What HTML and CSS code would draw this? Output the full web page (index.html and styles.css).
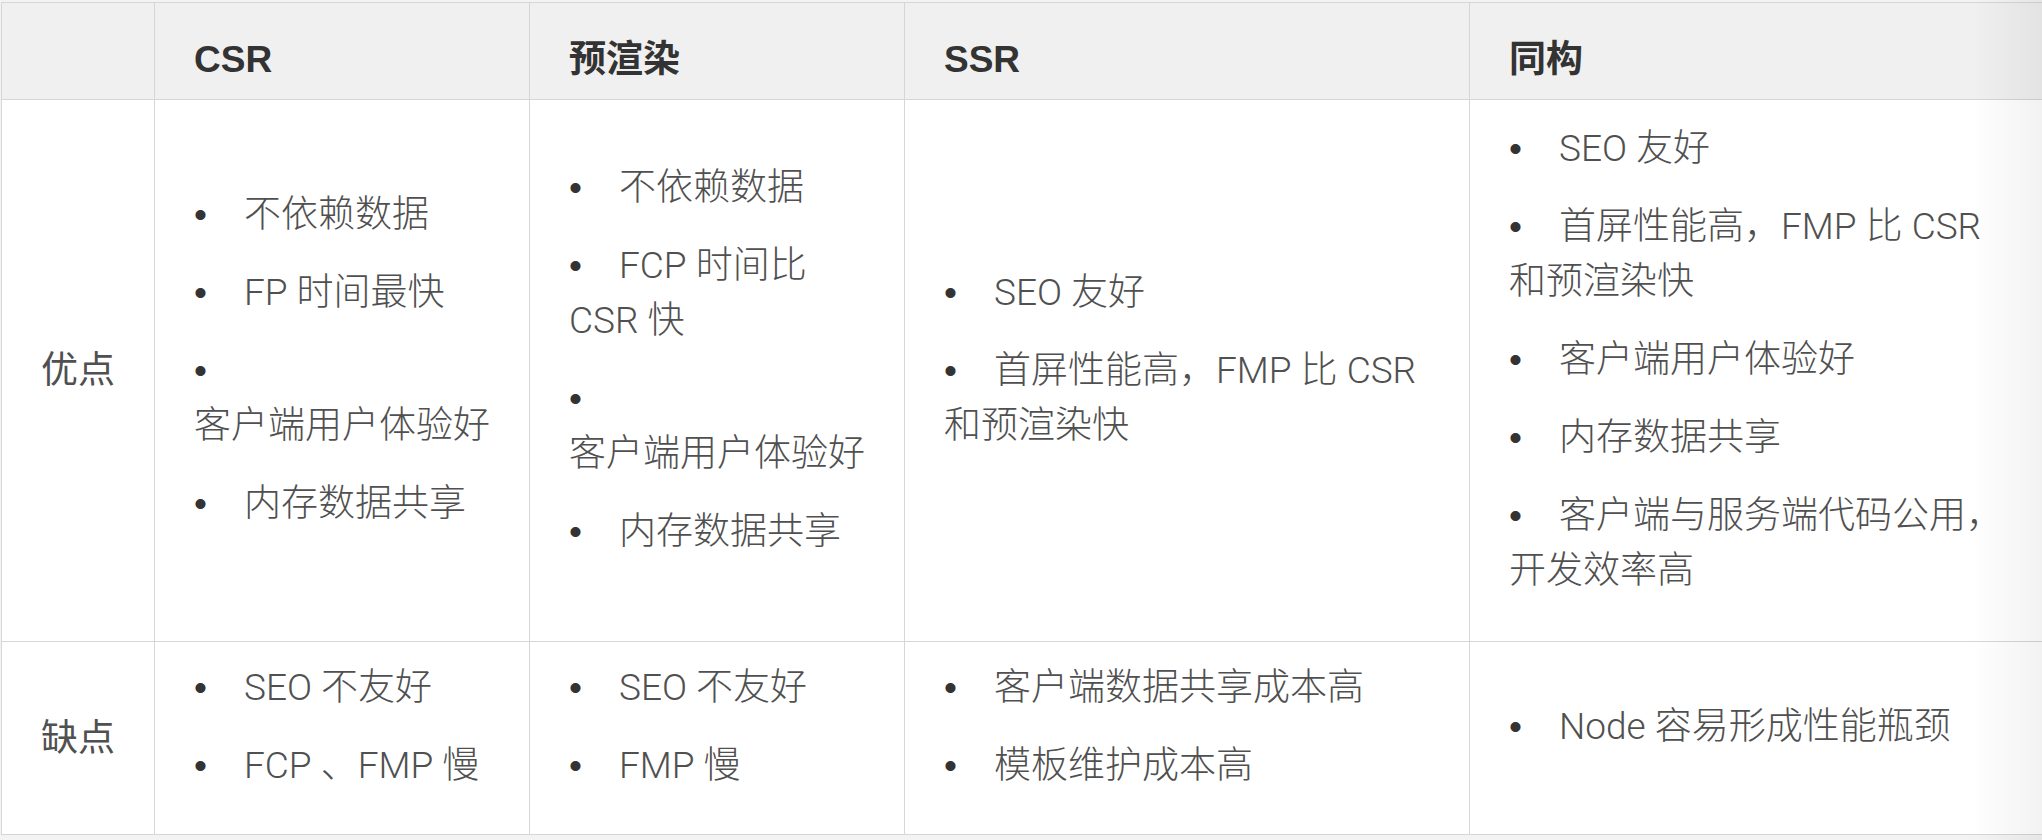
FILE: index.html
```html
<!DOCTYPE html>
<html lang="zh-CN">
<head>
<meta charset="utf-8">
<title>CSR / 预渲染 / SSR / 同构</title>
<link rel="stylesheet" href="styles.css">
</head>
<body>
<table class="compare">
  <colgroup>
    <col class="col-label">
    <col class="col-narrow">
    <col class="col-narrow">
    <col class="col-wide">
    <col class="col-last">
  </colgroup>
  <thead>
    <tr class="head-row">
      <th></th>
      <th>CSR</th>
      <th>预渲染</th>
      <th>SSR</th>
      <th>同构</th>
    </tr>
  </thead>
  <tbody>
    <tr class="pros-row">
      <th class="row-label">优点</th>
      <td>
        <ul class="points">
          <li>不依赖数据</li>
          <li>FP 时间最快</li>
          <li>客户端用户体验好</li>
          <li>内存数据共享</li>
        </ul>
      </td>
      <td>
        <ul class="points">
          <li>不依赖数据</li>
          <li>FCP 时间比 CSR 快</li>
          <li>客户端用户体验好</li>
          <li>内存数据共享</li>
        </ul>
      </td>
      <td>
        <ul class="points">
          <li>SEO 友好</li>
          <li>首屏性能高，FMP 比 CSR 和预渲染快</li>
        </ul>
      </td>
      <td>
        <ul class="points">
          <li>SEO 友好</li>
          <li>首屏性能高，FMP 比 CSR 和预渲染快</li>
          <li>客户端用户体验好</li>
          <li>内存数据共享</li>
          <li>客户端与服务端代码公用，<wbr>开发效率高</li>
        </ul>
      </td>
    </tr>
    <tr class="cons-row">
      <th class="row-label">缺点</th>
      <td>
        <ul class="points">
          <li>SEO 不友好</li>
          <li>FCP 、FMP 慢</li>
        </ul>
      </td>
      <td>
        <ul class="points">
          <li>SEO 不友好</li>
          <li>FMP 慢</li>
        </ul>
      </td>
      <td>
        <ul class="points">
          <li>客户端数据共享成本高</li>
          <li>模板维护成本高</li>
        </ul>
      </td>
      <td>
        <ul class="points">
          <li>Node 容易形成性能瓶颈</li>
        </ul>
      </td>
    </tr>
  </tbody>
</table>
</body>
</html>
```
FILE: styles.css
```css
html {
  background: #f3f3f3;
}

body {
  margin: 0;
  padding: 2px 0 0 1px;
  overflow: hidden;
  font-family: Roboto, "Noto Sans CJK SC", sans-serif;
  font-weight: 300;
  color: #505050;
}

body::after {
  content: "";
  position: fixed;
  top: 0;
  right: 0;
  width: 70px;
  height: 100%;
  background: linear-gradient(to right, rgba(0, 0, 0, 0), rgba(0, 0, 0, 0.05));
  pointer-events: none;
}

.compare {
  width: 2041px;
  table-layout: fixed;
  border-collapse: collapse;
  background: #fff;
  font-size: 37px;
}

.col-label { width: 153px; }
.col-narrow { width: 375px; }
.col-wide { width: 565px; }
.col-last { width: 573px; }

.compare th,
.compare td {
  border: 1px solid #d6d6d6;
  padding: 18px 30px 18px 39px;
  vertical-align: middle;
  text-align: left;
}

.compare tr > :last-child {
  border-right: none;
}

.head-row {
  height: 97px;
}

.head-row th {
  background: #f0f0f0;
  font-family: "Liberation Sans", "Noto Sans CJK SC", sans-serif;
  font-weight: 700;
  color: #333;
  padding-top: 29px;
  padding-bottom: 12px;
  line-height: 55px;
}

.row-label {
  font-weight: 400;
  color: #505050;
  line-height: 55px;
}

.pros-row {
  height: 542px;
}

.cons-row {
  height: 192px;
}

.points {
  list-style: none;
  margin: 0;
  padding: 0;
  line-height: 55px;
  word-break: keep-all;
}

.points li {
  margin: 0 0 23px;
}

.points li::before {
  content: "•";
  display: inline-block;
  width: 50px;
  font-family: "Liberation Sans", sans-serif;
  font-weight: 400;
  color: #333;
}
```
